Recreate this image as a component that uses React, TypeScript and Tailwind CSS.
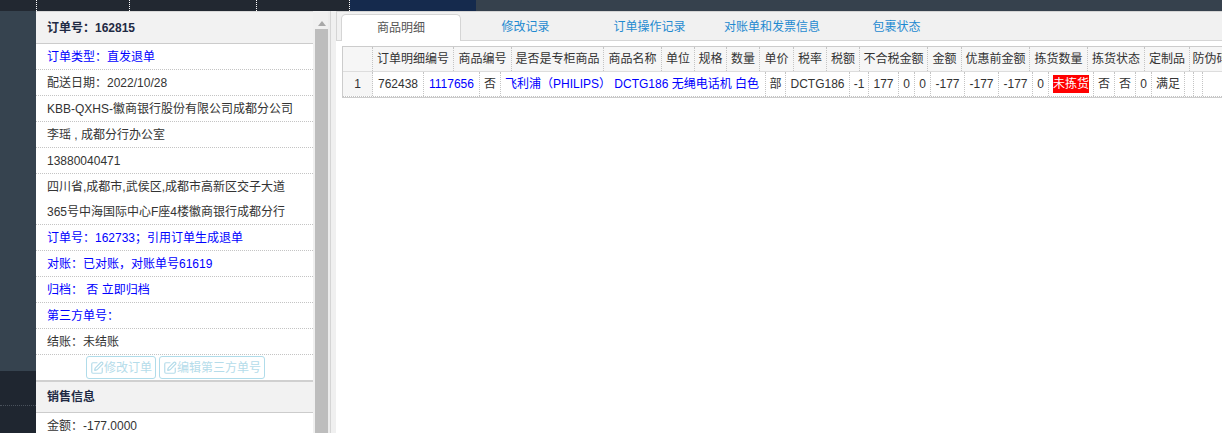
import { SquarePen } from 'lucide-react';

const font = "font-['Liberation_Sans','Noto_Sans_CJK_SC',sans-serif]";

const headCols = [
  { label: '', w: 'w-[30px]' },
  { label: '订单明细编号', w: 'w-[81px]' },
  { label: '商品编号', w: 'w-[58px]' },
  { label: '是否是专柜商品', w: 'w-[92px]' },
  { label: '商品名称', w: 'w-[58px]' },
  { label: '单位', w: 'w-[33px]' },
  { label: '规格', w: 'w-[32px]' },
  { label: '数量', w: 'w-[33px]' },
  { label: '单价', w: 'w-[34px]' },
  { label: '税率', w: 'w-[33px]' },
  { label: '税额', w: 'w-[33px]' },
  { label: '不合税金额', w: 'w-[68px]' },
  { label: '金额', w: 'w-[34px]' },
  { label: '优惠前金额', w: 'w-[68px]' },
  { label: '拣货数量', w: 'w-[58px]' },
  { label: '拣货状态', w: 'w-[57px]' },
  { label: '定制品', w: 'w-[45px]' },
  { label: '防伪码', w: 'w-[42px]' },
];

const rowCols = [
  { text: '1', w: 'w-[30px]', cls: 'bg-[#f6f6f6] justify-center' },
  { text: '762438', w: 'w-[51px]', cls: 'justify-center' },
  { text: '1117656', w: 'w-[56px]', cls: 'justify-center text-[#0000ff]' },
  { text: '否', w: 'w-[21px]', cls: 'justify-center' },
  { text: '飞利浦（PHILIPS） DCTG186 无绳电话机 白色', w: 'w-[265px]', cls: 'pl-[4px] text-[#0000ff]' },
  { text: '部', w: 'w-[20px]', cls: 'justify-center' },
  { text: 'DCTG186', w: 'w-[64px]', cls: 'justify-center' },
  { text: '-1', w: 'w-[19px]', cls: 'justify-center' },
  { text: '177', w: 'w-[30px]', cls: 'justify-center' },
  { text: '0', w: 'w-[16px]', cls: 'justify-center' },
  { text: '0', w: 'w-[16px]', cls: 'justify-center' },
  { text: '-177', w: 'w-[34px]', cls: 'justify-center' },
  { text: '-177', w: 'w-[34px]', cls: 'justify-center' },
  { text: '-177', w: 'w-[34px]', cls: 'justify-center' },
  { text: '0', w: 'w-[16px]', cls: 'justify-center' },
  { text: '未拣货', w: 'w-[45px]', cls: 'justify-center' },
  { text: '否', w: 'w-[21px]', cls: 'justify-center' },
  { text: '否', w: 'w-[21px]', cls: 'justify-center' },
  { text: '0', w: 'w-[16px]', cls: 'justify-center' },
  { text: '满足', w: 'w-[33px]', cls: 'justify-center' },
  { text: '', w: 'w-[9px]', cls: '' },
  { text: '', w: 'w-[9px]', cls: '' },
];

const infoRows = [
  { text: '订单类型：直发退单', blue: true },
  { text: '配送日期：2022/10/28' },
  { text: 'KBB-QXHS-徽商银行股份有限公司成都分公司' },
  { text: '李瑶 , 成都分行办公室' },
  { text: '13880040471' },
  { text: '四川省,成都市,武侯区,成都市高新区交子大道', text2: '365号中海国际中心F座4楼徽商银行成都分行' },
  { text: '订单号：162733；引用订单生成退单', blue: true },
  { text: '对账：已对账，对账单号61619', blue: true },
  { text: '归档： 否 立即归档', blue: true },
  { text: '第三方单号：', blue: true },
  { text: '结账：未结账' },
];

const tabs = [
  { label: '修改记录', w: 'w-[129px]' },
  { label: '订单操作记录', w: 'w-[119px]' },
  { label: '对账单和发票信息', w: 'w-[126px]' },
  { label: '包裹状态', w: 'w-[123px]' },
];

function TopBar() {
  return (
    <div className="flex h-[11px] shrink-0 bg-[#36414d]">
      <div className="w-[37px] bg-[#222831] border-r border-dotted border-white" />
      <div className="w-[93px] bg-[#222831] border-r border-dotted border-white" />
      <div className="w-[127px] bg-[#222831] border-r border-dotted border-white" />
      <div className="w-[93px] bg-[#222831] border-r border-dotted border-white" />
      <div className="w-[126px] bg-[#152a4d]" />
    </div>
  );
}

function SectionHead({ title, h }: { title: string; h: string }) {
  return (
    <div className={`${h} flex items-center border-b border-[#cccccc] bg-[#f2f2f2] pl-[11px] text-[12px] font-bold text-[#1f2a44]`}>
      {title}
    </div>
  );
}

function OrderPanel() {
  return (
    <div className="w-[277px] shrink-0 overflow-hidden bg-white border-t border-[#d9d9d9] text-[12px] text-[#333333]">
      <SectionHead title="订单号：162815" h="h-[32px]" />
      {infoRows.map((row) => (
        <div
          key={row.text}
          className={`border-b border-dotted border-[#c4c4c4] pl-[11px] leading-[25px] ${row.blue ? 'text-[#0000ff]' : ''}`}
        >
          <div className="mt-[1px] -mb-[1px]">
            <div className="whitespace-nowrap">{row.text}</div>
            {row.text2 && <div className="whitespace-nowrap">{row.text2}</div>}
          </div>
        </div>
      ))}
      <div className="flex h-[27px] items-center gap-[3px] border-b-2 border-[#d0d0d0] pl-[50px]">
        <button className="flex h-[23px] w-[70px] items-center justify-center rounded-[3px] border border-[#b0dcea] text-[#b5dcea]">
          <SquarePen size={14} strokeWidth={2} />
          修改订单
        </button>
        <button className="flex h-[23px] w-[106px] items-center justify-center rounded-[3px] border border-[#b0dcea] text-[#b5dcea]">
          <SquarePen size={14} strokeWidth={2} />
          编辑第三方单号
        </button>
      </div>
      <SectionHead title="销售信息" h="h-[31px]" />
      <div className="mt-[1px] pl-[11px] leading-[25px]">金额：-177.0000</div>
    </div>
  );
}

function ScrollBar() {
  return (
    <div className="flex w-[15px] shrink-0 flex-col bg-[#f0f0f0] pl-[2px] pt-[6px]">
      <div className="flex h-[12px] items-center justify-center">
        <div className="h-0 w-0 border-x-[4px] border-b-[5px] border-x-transparent border-b-[#a8a8a8]" />
      </div>
      <div className="flex-1 bg-[#bdbdbd]" />
    </div>
  );
}

function DetailTable() {
  return (
    <div className="ml-[6px] mt-[5px] h-[52px] overflow-hidden border-y border-l border-[#cccccc] bg-white text-[12px] text-[#333333]">
      <div className="flex h-[25px] border-b border-[#dddddd] bg-[#f6f6f6]">
        {headCols.map((col, i) => (
          <div
            key={i}
            className={`${col.w} flex shrink-0 items-center justify-center whitespace-nowrap border-r border-dotted border-[#c4c4c4]`}
          >
            {col.label}
          </div>
        ))}
      </div>
      <div className="flex h-[25px] border-b border-dotted border-[#c4c4c4]">
        {rowCols.map((col, i) => (
          <div
            key={i}
            className={`${col.w} ${col.cls} flex shrink-0 items-center whitespace-nowrap border-r border-dotted border-[#c4c4c4]`}
          >
            {col.text === '未拣货' ? (
              <span className="bg-[#ff0000] leading-[18px] text-white">{col.text}</span>
            ) : (
              col.text
            )}
          </div>
        ))}
      </div>
    </div>
  );
}

export default function App() {
  return (
    <div className={`${font} flex h-[433px] w-[1222px] flex-col overflow-hidden bg-white`}>
      <TopBar />
      <div className="flex min-h-0 flex-1">
        <div className="flex w-[36px] shrink-0 flex-col bg-[#36434f]">
          <div className="h-[360px] shrink-0" />
          <div className="flex-1 bg-[#1f2630] pt-[34px]">
            <div className="border-t border-dotted border-[#4a525c]" />
          </div>
        </div>
        <OrderPanel />
        <ScrollBar />
        <div className="w-[3px] shrink-0 border-r border-[#d5d5d5] bg-[#ececec]" />
        <div className="w-[5px] shrink-0 bg-[#f0f0f0]" />
        <div className="min-w-0 flex-1">
          <div className="flex h-[30px] items-end border-y border-l border-[#d5d5d5] bg-[#f1f1f1] pl-[4px] text-[12px]">
            <div className="-mb-px flex h-[27px] w-[120px] shrink-0 items-center justify-center rounded-t-[5px] border border-b-0 border-[#d5d5d5] bg-white text-[#555555]">
              商品明细
            </div>
            {tabs.map((tab) => (
              <div key={tab.label} className={`${tab.w} flex h-[27px] shrink-0 items-center justify-center text-[#1f8ad0]`}>
                {tab.label}
              </div>
            ))}
          </div>
          <DetailTable />
        </div>
      </div>
    </div>
  );
}
